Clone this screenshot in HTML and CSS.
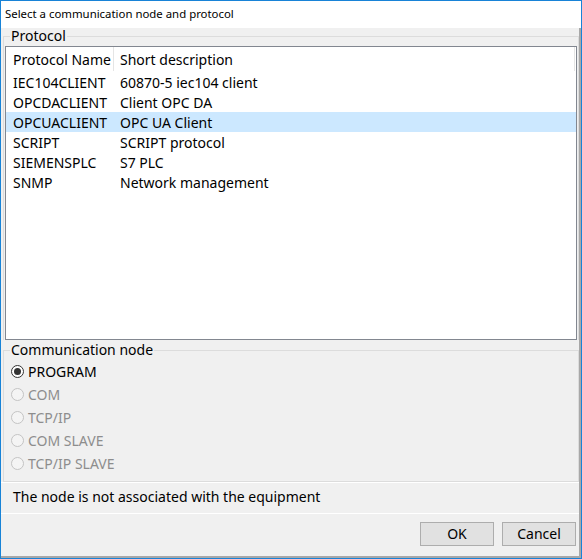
FILE: index.html
```html
<!DOCTYPE html>
<html>
<head>
<meta charset="utf-8">
<link rel="stylesheet" href="styles.css">
</head>
<body>
<div class="window">
  <div class="titlebar">Select a communication node and protocol</div>
  <div class="content">
    <fieldset class="group group-protocol">
      <legend class="legend">Protocol</legend>
      <div class="listbox">
        <div class="row header">
          <div class="cell c1">Protocol Name</div>
          <div class="cell c2">Short description</div>
        </div>
        <div class="row"><div class="cell c1">IEC104CLIENT</div><div class="cell c2">60870-5 iec104 client</div></div>
        <div class="row"><div class="cell c1">OPCDACLIENT</div><div class="cell c2">Client OPC DA</div></div>
        <div class="row selected"><div class="cell c1">OPCUACLIENT</div><div class="cell c2">OPC UA Client</div></div>
        <div class="row"><div class="cell c1">SCRIPT</div><div class="cell c2">SCRIPT protocol</div></div>
        <div class="row"><div class="cell c1">SIEMENSPLC</div><div class="cell c2">S7 PLC</div></div>
        <div class="row"><div class="cell c1">SNMP</div><div class="cell c2">Network management</div></div>
      </div>
    </fieldset>
    <fieldset class="group group-node">
      <legend class="legend">Communication node</legend>
      <div class="radios">
        <div class="radio-row"><span class="radio checked"></span><span class="radio-label">PROGRAM</span></div>
        <div class="radio-row disabled"><span class="radio"></span><span class="radio-label">COM</span></div>
        <div class="radio-row disabled"><span class="radio"></span><span class="radio-label">TCP/IP</span></div>
        <div class="radio-row disabled"><span class="radio"></span><span class="radio-label">COM SLAVE</span></div>
        <div class="radio-row disabled"><span class="radio"></span><span class="radio-label">TCP/IP SLAVE</span></div>
      </div>
    </fieldset>
    <div class="status">The node is not associated with the equipment</div>
    <div class="buttons">
      <button class="btn">OK</button>
      <button class="btn">Cancel</button>
    </div>
  </div>
</div>
</body>
</html>
```

FILE: styles.css
```css
html, body {
  margin: 0;
  padding: 0;
  background: #ffffff;
}
body {
  font-family: "Noto Sans", "Open Sans", sans-serif;
  font-size: 14px;
  color: #000;
}
.window {
  width: 582px;
  height: 559px;
  box-sizing: border-box;
  border: 1px solid #1883d7;
  display: flex;
  flex-direction: column;
}
.titlebar {
  height: 27px;
  background: #fff;
  font-size: 11.4px;
  line-height: 25px;
  padding-left: 4px;
  color: #000;
}
.content {
  flex: 1;
  background: #f0f0f0;
  border-right: 2px solid #a8a8a8;
  border-bottom: 2px solid #a8a8a8;
  display: flex;
  flex-direction: column;
}
.group {
  margin: 0 0 0 2px;
  border: 1px solid #dcdcdc;
  min-width: 0;
  padding-left: 1px;
}
.legend {
  padding: 0 1px;
  margin-left: 5px;
  height: 16px;
  line-height: 16px;
}
.group-protocol {
  padding: 2px 1px 0 1px;
  border-bottom: none;
}
.listbox {
  height: 294px;
  box-sizing: border-box;
  border: 1px solid #828790;
  background: #fff;
}
.row {
  display: flex;
  height: 20px;
  line-height: 22px;
}
.row.header {
  height: 25px;
  line-height: 25px;
}
.row.selected {
  background: #cce8ff;
}
.cell {
  white-space: nowrap;
  box-sizing: border-box;
}
.c1 {
  width: 108px;
  padding-left: 7px;
}
.c2 {
  width: 461px;
  padding-left: 6px;
}
.header .c1, .header .c2 {
  border-right: 1px solid #e5e5e5;
}
.header .cell {
  height: 24px;
}
.group-node {
  margin-top: 2px;
  padding: 2px 0 6px 1px;
}
.radios {
  padding-left: 6px;
}
.radio-row {
  height: 23px;
  display: flex;
  align-items: center;
}
.radio {
  width: 13px;
  height: 13px;
  box-sizing: border-box;
  border-radius: 50%;
  border: 1px solid #333;
  background: #fff;
  display: flex;
  align-items: center;
  justify-content: center;
  margin-right: 4px;
}
.radio.checked::after {
  content: "";
  width: 7px;
  height: 7px;
  border-radius: 50%;
  background: #333;
}
.disabled .radio {
  border-color: #c4c4c4;
  background: #f4f4f4;
}
.disabled .radio-label {
  color: #8d8d8d;
}
.status {
  border-top: 1px solid #fff;
  border-bottom: 1px solid #fff;
  height: 32px;
  line-height: 27px;
  padding-left: 12px;
  box-sizing: border-box;
}
.buttons {
  flex: 1;
  display: flex;
  justify-content: flex-end;
  align-items: flex-start;
  gap: 8px;
  padding: 8px 3px 0 0;
}
.btn {
  width: 74px;
  height: 24px;
  box-sizing: border-box;
  border: 1px solid #adadad;
  background: #e1e1e1;
  font-family: "Noto Sans", "Open Sans", sans-serif;
  font-size: 14px;
  color: #000;
  padding: 0;
  line-height: 20px;
}
```
